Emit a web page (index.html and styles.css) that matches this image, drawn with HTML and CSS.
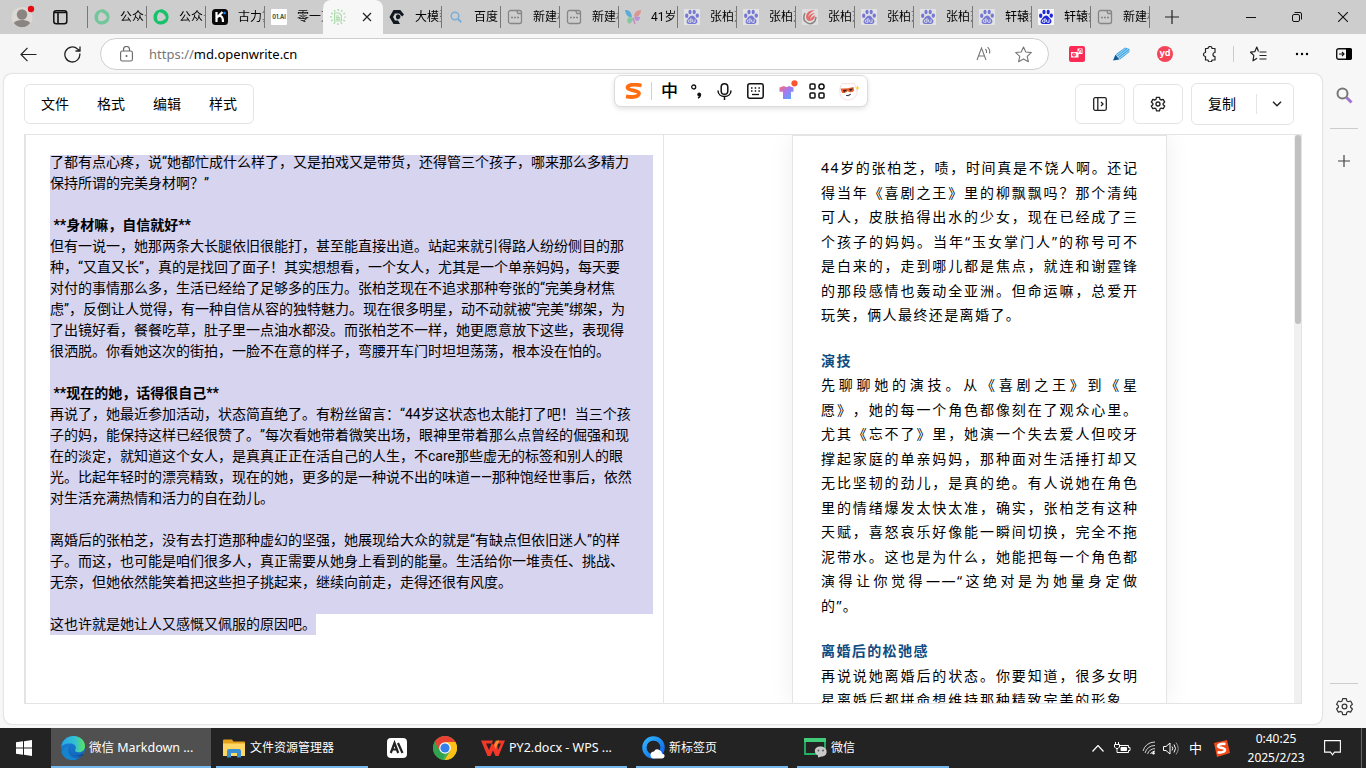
FILE: index.html
```html
<!DOCTYPE html>
<html lang="zh-CN">
<head>
<meta charset="utf-8">
<title>微信 Markdown 编辑器</title>
<link rel="stylesheet" href="styles.css">
</head>
<body>
<svg class="defs" width="0" height="0" aria-hidden="true">
  <defs>
    <linearGradient id="edgeA" x1="0" y1="0" x2="1" y2="0"><stop offset="0" stop-color="#26a7e8"/><stop offset=".6" stop-color="#35c1d0"/><stop offset="1" stop-color="#5be45a"/></linearGradient>
    <linearGradient id="edgeB" x1="0" y1="0" x2="0" y2="1"><stop offset="0" stop-color="#1b87dc"/><stop offset="1" stop-color="#1161b6"/></linearGradient>
    <linearGradient id="shirtG" x1="0" y1="0" x2="1" y2="1"><stop offset="0" stop-color="#ff6b6b"/><stop offset=".45" stop-color="#a678f5"/><stop offset="1" stop-color="#43b4f5"/></linearGradient>
    <linearGradient id="qG" x1="0" y1="0" x2="1" y2="1"><stop offset="0" stop-color="#31b4ff"/><stop offset="1" stop-color="#0b62e8"/></linearGradient>
    <symbol id="swirl" viewBox="0 0 16 16"><g fill="currentColor"><path id="blade" d="M10.500.8C5.500-.8.300 2.800.500 8c0 1.800.6 3.300 1.700 4.500 1.600.4 2.600-.2 2.300-1.700C3 7 5 2.800 10.500.8z"/><path d="M10.500.8C5.500-.8.300 2.800.500 8c0 1.800.6 3.300 1.700 4.500 1.600.4 2.600-.2 2.300-1.700C3 7 5 2.800 10.500.8z" transform="rotate(120 8 8)"/><path d="M10.500.8C5.500-.8.300 2.800.500 8c0 1.800.6 3.300 1.700 4.500 1.600.4 2.600-.2 2.300-1.700C3 7 5 2.800 10.500.8z" transform="rotate(240 8 8)"/></g></symbol>
    <symbol id="paw" viewBox="0 0 16 16"><rect width="16" height="16" fill="#fff" opacity=".85"/><g fill="currentColor"><ellipse cx="2.700" cy="6.800" rx="1.700" ry="2.200"/><ellipse cx="6" cy="3" rx="1.600" ry="2.200"/><ellipse cx="10.200" cy="3" rx="1.600" ry="2.200"/><ellipse cx="13.300" cy="6.600" rx="1.700" ry="2.200"/><path d="M8 6.400c2.200 0 2.800 2.200 4.400 3.700 1.800 1.800 1.200 4.700-1.400 4.900H5C2.400 14.800 1.900 12 3.600 10.200 5.200 8.800 5.800 6.400 8 6.400z"/></g><path d="M7 9v4.300H5.400a1.200 1.200 0 0 1 0-2.400H7M8.600 10.500v1.800q0 1 1 1h1.500v-3" fill="none" stroke="#fff" stroke-width=".9"/></symbol>
    <symbol id="page" viewBox="0 0 16 16"><path d="M3.500 1.500h6l1.500 3h3.500v8a2 2 0 0 1-2 2h-9a2 2 0 0 1-2-2v-9a2 2 0 0 1 2-2zM9.500 1.500h3a2 2 0 0 1 2 2v1" fill="none" stroke="#868686" stroke-width="1.300"/><path d="M4 8.500h2M7 8.500h2M10 8.500h2" stroke="#868686" stroke-width="1.500"/></symbol>
    <symbol id="gear" viewBox="0 0 24 24"><path d="M9.700 2h4.600l.7 3 1.700 1 3-.9 2.300 4-2.300 2.100v1.800l2.300 2.100-2.300 4-3-.9-1.700 1-.7 3H9.700L9 19.200l-1.700-1-3 .9-2.300-4L4.300 13v-1.800L2 9.100l2.300-4 3 .9L9 5z" fill="none" stroke="currentColor" stroke-linejoin="round"/><circle cx="12" cy="12" r="3" fill="none" stroke="currentColor"/></symbol>
  </defs>
</svg>

<header class="tabbar">
  <div class="profile"><svg width="24" height="24" viewBox="0 0 24 24"><circle cx="11" cy="12.500" r="10.500" fill="#dcd9d5"/><circle cx="11" cy="9.500" r="5.200" fill="#8a8581"/><path d="M2.800 18c2-4 14.400-4 16.400 0a10 10 0 0 1-16.400 0z" fill="#8a8581"/><circle cx="20" cy="4" r="3.200" fill="#e50b12"/></svg></div>
  <div class="workspaces"><svg width="15" height="15" viewBox="0 0 15 15"><rect x=".8" y=".8" width="13" height="13" rx="2.500" fill="none" stroke="#111" stroke-width="1.500"/><path d="M1 2.500h13M5 3v11" stroke="#111" stroke-width="1.600"/></svg></div>
  <nav class="tabs">
    <div class="tab"><svg class="fav dim green"><use href="#swirl"/></svg><span>公众号</span></div>
    <div class="tab"><svg class="fav green"><use href="#swirl"/></svg><span>公众号</span></div>
    <div class="tab"><svg class="fav" viewBox="0 0 16 16"><rect width="16" height="16" rx="3.500" fill="#0a0a0a"/><path d="M4.500 3v10M5 8.500 10.500 3M7 7c3-.5 4 2 4 6" fill="none" stroke="#fff" stroke-width="2.200"/><circle cx="12.500" cy="4" r="1.300" fill="#1683ff"/></svg><span>古力算</span></div>
    <div class="tab"><i class="fav yi">01.AI</i><span>零一万</span></div>
    <div class="tab active"><svg class="fav" viewBox="0 0 16 16" fill="none" stroke="#acdcac" stroke-width="1.200"><path d="M4.600 4h4.500l2.300 2.300V12H4.600z"/><path d="M6 7h3M6 8.700h4M6 10.300h4"/><circle cx="8" cy="8" r="7" stroke-width="1.900" stroke-dasharray="1.500 2.165" stroke-dashoffset=".75"/></svg><svg class="close" width="10" height="10" viewBox="0 0 10 10"><path d="m1 1 8 8M9 1 1 9" stroke="#222" stroke-width="1.200"/></svg></div>
    <div class="tab"><svg class="fav" viewBox="0 0 16 16"><path d="M4.500 1h6.800L15 5.500l-1.800 2-1.800-1.700-1.200-1.400H6L4 8l2 3.600h3l2 3.400H4.500L.5 8z" fill="#111820"/><path d="M7 6.500 9 5.200l2.300 1.300v2.600L9 10.500 7 9.200z" fill="#111820"/></svg><span>大模型</span></div>
    <div class="tab"><svg class="fav" viewBox="0 0 16 16"><circle cx="7" cy="7" r="3.800" fill="none" stroke="#7aaed8" stroke-width="1.500"/><path d="m9.800 9.800 3.500 3.500" stroke="#7aaed8" stroke-width="2"/></svg><span>百度</span></div>
    <div class="tab"><svg class="fav"><use href="#page"/></svg><span>新建标</span></div>
    <div class="tab"><svg class="fav"><use href="#page"/></svg><span>新建标</span></div>
    <div class="tab"><svg class="fav fly" viewBox="0 0 16 16"><path d="M0 1q6-1 7 7Q1 9 0 1z" fill="#2ba0dc"/><path d="M3 8.500q4-1 5 1-1 5-4 5-3-1-1-6z" fill="#62c788"/><path d="M9 7q1-6 7-6 0 6-6 7z" fill="#e57b74"/><path d="M9 8q4-1 6 0 0 4-4 4z" fill="#b07ad8"/><path d="m8 9 2 6" stroke="#ce69c8" stroke-width="1.500"/></svg><span>41岁网</span></div>
    <div class="tab"><svg class="fav baidu dim"><use href="#paw"/></svg><span>张柏芝</span></div>
    <div class="tab"><svg class="fav baidu dim"><use href="#paw"/></svg><span>张柏芝</span></div>
    <div class="tab"><svg class="fav" viewBox="0 0 16 16"><rect width="16" height="16" fill="#dedede"/><path d="M3 4Q0 10 4 13q5 4 9-1l1-4" fill="none" stroke="#858585" stroke-width="1.500"/><path d="M13 1Q5 1 4 7q0 5 4 5 5-1 5-6-3 2-5 4 1-4 5-6-4 0-7 4 1-4 7-7z" fill="#e66b6b"/></svg><span>张柏芝</span></div>
    <div class="tab"><svg class="fav baidu dim"><use href="#paw"/></svg><span>张柏芝</span></div>
    <div class="tab"><svg class="fav baidu dim"><use href="#paw"/></svg><span>张柏芝</span></div>
    <div class="tab"><svg class="fav baidu dim"><use href="#paw"/></svg><span>轩辕剑</span></div>
    <div class="tab"><svg class="fav baidu"><use href="#paw"/></svg><span>轩辕剑</span></div>
    <div class="tab"><svg class="fav"><use href="#page"/></svg><span>新建标</span></div>
  </nav>
  <div class="newtab"><svg width="14" height="14" viewBox="0 0 14 14"><path d="M7 0v14M0 7h14" stroke="#222" stroke-width="1.200"/></svg></div>
  <div class="winbtns">
    <svg width="10" height="10" viewBox="0 0 10 10"><path d="M0 5.500h10" stroke="#111"/></svg>
    <svg width="10" height="10" viewBox="0 0 10 10" fill="none" stroke="#111"><rect x=".5" y="2.500" width="7" height="7" rx="1.500"/><path d="M2.500.5H8A1.500 1.500 0 0 1 9.500 2v5.500"/></svg>
    <svg width="10" height="10" viewBox="0 0 10 10"><path d="m0 0 10 10M10 0 0 10" stroke="#111" stroke-width="1.100"/></svg>
  </div>
</header>

<div class="toolbar">
  <div class="nav"><svg width="17" height="15" viewBox="0 0 17 15" fill="none" stroke="#222" stroke-width="1.200"><path d="M16.500 7.500H1M7.500.8 1 7.500l6.500 6.700"/></svg></div>
  <div class="nav"><svg width="17" height="17" viewBox="0 0 17 17" fill="none" stroke="#222" stroke-width="1.300"><path d="M15.800 7.500A7.500 7.500 0 1 1 13.500 3L16 5M16 .5V5h-4.500"/></svg></div>
  <div class="address">
    <svg width="13" height="16" viewBox="0 0 13 16" fill="none" stroke="#666" stroke-width="1.100"><rect x=".6" y="5" width="11.800" height="10" rx="1.800"/><path d="M3.500 5V3.500a3 3 0 0 1 6 0V5"/><circle cx="6.500" cy="10" r=".5" fill="#666"/></svg>
    <p class="url"><span>https://</span>md.openwrite.cn</p>
    <svg class="read" width="16" height="16" viewBox="0 0 16 16" fill="none" stroke="#777" stroke-width="1.100"><path d="m1 14 4.500-12L10 14M2.500 10h6M9.500 3q1.500 1.500 1 4M11.500 1.200q3 2.500 2 6.300"/></svg>
    <svg width="17" height="17" viewBox="0 0 17 17" fill="none" stroke="#777" stroke-width="1.100" stroke-linejoin="round"><path d="m8.500 1 2.300 5 5.500.6-4.100 3.700 1.200 5.400-4.900-2.800-4.900 2.800 1.200-5.400L.7 6.600l5.500-.6z"/></svg>
  </div>
  <div class="ext"><svg width="16" height="16" viewBox="0 0 16 16"><rect width="16" height="16" rx="2" fill="#fb2b55"/><path d="M8.500 2.500h5v5.500h-4v3.500h-7.500V6h6.500z" fill="#fff"/><path d="M5 6.500v4.500M3.500 7.800h3.200v1.800H3.500zM9 6.800l1.800-3.300h1.400v3.500" fill="none" stroke="#fb2b55" stroke-width=".9"/></svg></div>
  <div class="ext"><svg width="17" height="14" viewBox="0 0 17 14"><path d="M3 7 12 .5 16.500 2v3L7 12.500z" fill="#45a7e4"/><path d="m3.500 8.500 9-7M4.700 10l10.500-8M6 11.500 16.500 3.500" stroke="#d9effb" stroke-width=".7"/><path d="m2.500 7.500 4 5L0 13.500z" fill="#125c96"/></svg></div>
  <div class="ext"><i class="yd">yd</i></div>
  <div class="ext"><svg width="16" height="16" viewBox="0 0 16 16" fill="none" stroke="#222" stroke-width="1.200"><path d="M4.500 2.500H7a2 2 0 0 1 4 0h3v4a2 2 0 0 0 0 4v3.500h-3a2 2 0 0 1-4 0H4.500v-3.500a2 2 0 0 1 0-4z" stroke-linejoin="round"/></svg></div>
  <i class="rule"></i>
  <div class="ext"><svg width="17" height="16" viewBox="0 0 17 16" fill="none" stroke="#222" stroke-width="1.200"><path d="M8.500 5.500 6.800 1 4.900 5.600.5 6.200l3.300 3.200L3 14.800l4-2.600" stroke-linejoin="round"/><path d="M9.500 6h7M9.500 9.500h7M9.500 13h7" /></svg></div>
  <div class="ext"><svg width="14" height="4" viewBox="0 0 14 4"><circle cx="2" cy="2" r="1.200"/><circle cx="7" cy="2" r="1.200"/><circle cx="12" cy="2" r="1.200"/></svg></div>
  <div class="ext last"><svg width="16" height="12" viewBox="0 0 16 12"><rect x=".7" y=".7" width="14.600" height="10.600" rx="2" fill="none" stroke="#111" stroke-width="1.400"/><path d="M10 0h4a2 2 0 0 1 2 2v8a2 2 0 0 1-2 2h-4z"/><path d="M3 6h5M6 4l2 2-2 2" fill="none" stroke="#111" stroke-width="1.100"/></svg></div>
</div>

<div class="body">
  <main class="card">
    <div class="apphead">
      <nav class="menu"><span>文件</span><span>格式</span><span>编辑</span><span>样式</span></nav>
      <div class="actions">
        <div class="btn"><svg width="14" height="14" viewBox="0 0 14 14" fill="none" stroke="#222" stroke-width="1.300"><rect x=".7" y=".7" width="12.600" height="12.600" rx="1.500"/><path d="M4.800 1v12M8 5l2 2-2 2"/></svg></div>
        <div class="btn"><svg width="16" height="16" stroke-width="2"><use href="#gear"/></svg></div>
        <div class="copy"><span>复制</span><i></i><svg width="10" height="6" viewBox="0 0 10 6" fill="none" stroke="#222" stroke-width="1.500"><path d="m1 .8 4 4 4-4"/></svg></div>
      </div>
    </div>
    <div class="work">
      <section class="editor">
        <div class="text">
          <div class="sel">
            <p>了都有点心疼，说“她都忙成什么样了，又是拍戏又是带货，还得管三个孩子，哪来那么多精力</p>
            <p>保持所谓的完美身材啊？”</p>
            <p></p>
            <p class="strong"> **身材嘛，自信就好**</p>
            <p>但有一说一，她那两条大长腿依旧很能打，甚至能直接出道。站起来就引得路人纷纷侧目的那</p>
            <p>种，“又直又长”，真的是找回了面子！其实想想看，一个女人，尤其是一个单亲妈妈，每天要</p>
            <p>对付的事情那么多，生活已经给了足够多的压力。张柏芝现在不追求那种夸张的“完美身材焦</p>
            <p>虑”，反倒让人觉得，有一种自信从容的独特魅力。现在很多明星，动不动就被“完美”绑架，为</p>
            <p>了出镜好看，餐餐吃草，肚子里一点油水都没。而张柏芝不一样，她更愿意放下这些，表现得</p>
            <p>很洒脱。你看她这次的街拍，一脸不在意的样子，弯腰开车门时坦坦荡荡，根本没在怕的。</p>
            <p></p>
            <p class="strong"> **现在的她，话得很自己**</p>
            <p>再说了，她最近参加活动，状态简直绝了。有粉丝留言：“44岁这状态也太能打了吧！当三个孩</p>
            <p>子的妈，能保持这样已经很赞了。”每次看她带着微笑出场，眼神里带着那么点曾经的倔强和现</p>
            <p>在的淡定，就知道这个女人，是真真正正在活自己的人生，不care那些虚无的标签和别人的眼</p>
            <p>光。比起年轻时的漂亮精致，现在的她，更多的是一种说不出的味道——那种饱经世事后，依然</p>
            <p>对生活充满热情和活力的自在劲儿。</p>
            <p></p>
            <p>离婚后的张柏芝，没有去打造那种虚幻的坚强，她展现给大众的就是“有缺点但依旧迷人”的样</p>
            <p>子。而这，也可能是咱们很多人，真正需要从她身上看到的能量。生活给你一堆责任、挑战、</p>
            <p>无奈，但她依然能笑着把这些担子挑起来，继续向前走，走得还很有风度。</p>
            <p></p>
          </div>
          <p class="tail">这也许就是她让人又感慨又佩服的原因吧。</p>
        </div>
      </section>
      <section class="preview">
        <article class="phone">
          <div class="para">
            <p>44岁的张柏芝，啧，时间真是不饶人啊。还记</p>
            <p>得当年《喜剧之王》里的柳飘飘吗？那个清纯</p>
            <p>可人，皮肤掐得出水的少女，现在已经成了三</p>
            <p>个孩子的妈妈。当年“玉女掌门人”的称号可不</p>
            <p>是白来的，走到哪儿都是焦点，就连和谢霆锋</p>
            <p>的那段感情也轰动全亚洲。但命运嘛，总爱开</p>
            <p class="end">玩笑，俩人最终还是离婚了。</p>
          </div>
          <h3>演技</h3>
          <div class="para">
            <p>先聊聊她的演技。从《喜剧之王》到《星</p>
            <p>愿》，她的每一个角色都像刻在了观众心里。</p>
            <p>尤其《忘不了》里，她演一个失去爱人但咬牙</p>
            <p>撑起家庭的单亲妈妈，那种面对生活捶打却又</p>
            <p>无比坚韧的劲儿，是真的绝。有人说她在角色</p>
            <p>里的情绪爆发太快太准，确实，张柏芝有这种</p>
            <p>天赋，喜怒哀乐好像能一瞬间切换，完全不拖</p>
            <p>泥带水。这也是为什么，她能把每一个角色都</p>
            <p>演得让你觉得——“这绝对是为她量身定做</p>
            <p class="end">的”。</p>
          </div>
          <h3>离婚后的松弛感</h3>
          <div class="para">
            <p>再说说她离婚后的状态。你要知道，很多女明</p>
            <p class="cut">星离婚后都拼命想维持那种精致完美的形象</p>
          </div>
        </article>
        <div class="scroll"><i></i></div>
      </section>
    </div>
  </main>
  <aside class="side">
    <svg width="17" height="17" viewBox="0 0 17 17" fill="none"><circle cx="6.500" cy="6.500" r="5" stroke="#777" stroke-width="2"/><path d="m10.500 10.500 5 5" stroke="#a073d0" stroke-width="3"/></svg>
    <i></i>
    <svg class="add" width="12" height="12" viewBox="0 0 12 12"><path d="M6 0v12M0 6h12" stroke="#444" stroke-width="1.200"/></svg>
    <i class="low"></i>
    <svg width="19" height="19" stroke-width="1.500"><use href="#gear"/></svg>
  </aside>
</div>

<div class="ime">
  <svg width="19" height="17" viewBox="0 0 19 17"><path d="M17.500 2.500C9 .8 3.500 2 3.500 4.800s11.500 2.500 11.500 5.500c0 3.500-6 4.500-13 3" fill="none" stroke="#ff6e12" stroke-width="3.800"/></svg>
  <i></i>
  <b>中</b>
  <svg width="11" height="15" viewBox="0 0 11 15"><circle cx="2.700" cy="3" r="2" fill="none" stroke="#111" stroke-width="1.300"/><path d="M9.500 10.500q0 2.500-2.500 3.500" fill="none" stroke="#111" stroke-width="1.400"/><circle cx="8.200" cy="10.500" r="1.900" fill="#111"/></svg>
  <svg width="15" height="17" viewBox="0 0 15 17" fill="none" stroke="#111" stroke-width="1.500"><rect x="4.200" y=".8" width="6.600" height="10.500" rx="3.300"/><path d="M1 7.500c0 8 13 8 13 0M7.500 13.500V17"/></svg>
  <svg width="17" height="16" viewBox="0 0 17 16"><rect x=".8" y=".8" width="15.400" height="14.400" rx="2" fill="none" stroke="#111" stroke-width="1.500"/><path d="M4 5h9M4 8h9" stroke="#111" stroke-width="1.500" stroke-dasharray="1.500 2.200"/><path d="M5 11.500h7" stroke="#111" stroke-width="1.300"/></svg>
  <svg width="19" height="22" viewBox="0 0 19 22"><path d="M.5 7.500 5 6q2.500 2 5 0l4.500 1.500v4.200H12V19H4v-7.300H.5z" fill="url(#shirtG)"/><circle cx="15.500" cy="3.300" r="3.100" fill="#fb552f"/></svg>
  <svg width="16" height="16" viewBox="0 0 16 16" fill="none" stroke="#111" stroke-width="1.500"><rect x="1" y="1" width="5" height="5" rx="1"/><circle cx="12.500" cy="3.500" r="2.600"/><rect x="1" y="10" width="5" height="5" rx="1"/><rect x="10" y="10" width="5" height="5" rx="1"/></svg>
  <svg width="21" height="20" viewBox="0 0 21 20"><path d="M1 12Q0 5 4 2l3 1q2-1 5 0l3-1q4 6 3 11-3 6-9 6-7 0-8-7z" fill="#fff" stroke="#f3d5d5" stroke-width=".8"/><path d="M1.500 7.500q6 .5 13-1.500l.5 4q-3 2-5 1l-1.500-1q-1 2-5.500 2z" fill="#ec6130"/><path d="m4 9.500 3.500-.5-2 1.800zM10.500 8.500l3-.5-2 1.800zM7 14.500q3 1 5-1.500" fill="#222" stroke="#222" stroke-width=".7"/><path d="m18.500 4 .8 2.200 1.700.8-1.700.8-.8 2.200-.8-2.200L16 7l1.700-.8z" fill="#ffd83a"/></svg>
</div>

<footer class="taskbar">
  <div class="start"><svg width="16" height="16" viewBox="0 0 16 16"><path d="M0 2.300 7 1.300V7.500H0zM8 1.200 16 0v7.500H8zM0 8.500h7v6.200l-7-1zM8 8.500h8V16l-8-1.200z" fill="#fff"/></svg></div>
  <div class="task on"><svg width="24" height="24" viewBox="0 0 24 24"><circle cx="12" cy="12" r="12" fill="url(#edgeB)"/><path d="M.2 11C1.500 3.500 7 0 12.500 0 20 0 24 5.500 24 10c0 4-3 6.300-6.500 6.300-2.500 0-3.800-1-3.300-2.300 2.300-4.300-1.800-7-5.700-6.500C4 7.500 1 9.500.2 11z" fill="url(#edgeA)"/><path d="M8 10c-3.500 7 2.500 13.500 10 12-6.500 5-16 1-17.500-6C2 12 5 10 8 10z" fill="#1683cf"/><path d="M10.500 9.500c-4 2.500-2 10 5 10 3 0 5.500-1.500 7-2.500l-1 3c-8 1-13-2-13-7 0-2 .7-3 2-3.500z" fill="#124a85"/></svg><span class="seg">微信 Markdown ...</span></div>
  <div class="task files"><svg width="22" height="19" viewBox="0 0 22 19"><path d="M0 1.500Q0 .5 1 .5h8l1.500 2H21q1 0 1 1V17H0z" fill="#e4a21c"/><path d="M0 4.500h22V17H0z" fill="#ffd766"/><path d="M4 18.500V12q0-2 2-2h10q2 0 2 2v6.500h-4V14H8v4.500z" fill="#3a8fd1"/></svg><span>文件资源管理器</span></div>
  <div class="pin"><svg width="20" height="20" viewBox="0 0 20 20"><rect width="20" height="20" rx="4" fill="#fff"/><path d="M3.800 15 7.500 5l3.700 10M5.500 11.500h4M11 5l4.500 10" fill="none" stroke="#222" stroke-width="2.200"/></svg></div>
  <div class="pin"><svg width="24" height="24" viewBox="0 0 24 24"><circle cx="12" cy="12" r="12" fill="#4caf50"/><path d="M12 12 1.600 6A12 12 0 0 1 22.400 6z" fill="#e94235"/><path d="M12 6h10.400A12 12 0 0 1 11.500 24l5.700-9z" fill="#fbc116"/><path d="M1.600 6 6.800 15l5.200-3z" fill="#e94235"/><path d="M1.600 6 6.800 15l5.200 3-2.500 5.700A12 12 0 0 1 1.600 6z" fill="#31a350"/><circle cx="12" cy="12" r="5.800" fill="#fff"/><circle cx="12" cy="12" r="4.600" fill="#347fe9"/></svg></div>
  <div class="task wps"><svg width="24" height="17" viewBox="0 0 24 17"><path fill-rule="evenodd" d="M0 .5h14.500L12.500 5l-1-1.500H5l3 6.500 4-9.500h2.500L16 3l1 7 3-6.500h-4L17 .5h7L17.500 16h-3L12 10.500 9.500 16h-3z" fill="#f3382a"/><path d="m13 5 2.500-4.500h3L14.500 9z" fill="#ff8a2b"/></svg><span class="seg">PY2.docx - WPS ...</span></div>
  <div class="task qb"><svg width="24" height="24" viewBox="0 0 24 24"><circle cx="11.500" cy="11.500" r="9" fill="none" stroke="url(#qG)" stroke-width="4.500"/><circle cx="11.500" cy="11.500" r="6.800" fill="#242424"/><path d="M12 22.500a3.500 3.500 0 0 1 0-7q2-4 6-1 2 1 2 3 3 .5 2.500 3-.5 2-2.500 2z" fill="#fff"/></svg><span>新标签页</span></div>
  <div class="task wx"><svg width="24" height="20" viewBox="0 0 24 20"><path d="M1 1h20v15H1z" fill="none" stroke="#20b464" stroke-width="1.800"/><path d="M0 0h22v4H0z" fill="#40cc78"/><path d="M16.500 8.500c8 0 8 10 1 10l-3.500 1v-2C9 15 10 8.500 16.500 8.500z" fill="#c9c9c9"/><circle cx="14.500" cy="12.500" r=".9" fill="#555"/><circle cx="19" cy="12.500" r=".9" fill="#555"/></svg><span>微信</span></div>
  <div class="tray">
    <svg width="12" height="7" viewBox="0 0 12 7" fill="none" stroke="#fff" stroke-width="1.200"><path d="m.5 6.500 5.500-6 5.500 6"/></svg>
    <svg width="17" height="13" viewBox="0 0 17 13" fill="none" stroke="#fff"><path d="M6 3.500h8.500v2h1.500v3h-1.500v2H5"/><path d="M7 5.500h5.500v3H7z" fill="#fff"/><path d="M1.500 0v2.500M4.500 0v2.500M.5 2.500h5V5L4 6.500H2L.5 5zM3 6.500v4h2"/></svg>
    <svg width="14" height="14" viewBox="0 0 14 14" fill="none" stroke="#fff"><path d="M1 10A12 12 0 0 1 13 1M3 12A10 10 0 0 1 13 4.500M5.500 13A8 8 0 0 1 13 7.700" opacity=".8"/><path d="M8.500 13a6 6 0 0 1 4.500-3"/><circle cx="11.500" cy="12.300" r="1.200" fill="#fff" stroke="none"/></svg>
    <svg width="16" height="13" viewBox="0 0 16 13" fill="none" stroke="#fff"><path d="M.5 4.500h2.500L7 1v11L3 8.500H.5zM9 4.500q1.500 2 0 4M11 2.500q3 4 0 8"/><path d="M13 .5q4.500 6 0 12" opacity=".5"/></svg>
    <span>中</span>
    <svg width="17" height="17" viewBox="0 0 17 17"><path d="m1 3 13-3 3 13-13 4z" fill="#f14a18"/><path d="M12.500 4C8 3.500 5 4.500 5 6.300s7 1.300 7 3.700c0 2-4 2.800-7.500 2.300" fill="none" stroke="#fff" stroke-width="2.500"/></svg>
  </div>
  <div class="clock"><time>0:40:25</time><time>2025/2/23</time></div>
  <div class="note"><svg width="17" height="16" viewBox="0 0 17 16" fill="none" stroke="#fff" stroke-width="1.100"><path d="M.6.6h15.800v11.500H10.500l-2 2.700-2-2.700H.6z"/></svg></div>
  <i class="desk"></i>
</footer>
</body>
</html>
```
FILE: styles.css
```css
* { box-sizing: border-box; }
body {
  margin: 0; width: 1366px; height: 768px; overflow: hidden;
  display: flex; flex-direction: column; background: #f7f7f7;
  font: 14px/21px Roboto, "Noto Sans CJK SC", sans-serif; color: #000;
  text-spacing-trim: space-all; position: relative;
}
p, h3 { margin: 0; white-space: pre; }
svg { flex: none; display: block; }
.defs { position: absolute; }

/* tab strip */
.tabbar { height: 34px; flex: none; background: #cdcdcd; display: flex; align-items: center; font-size: 12px; }
.profile { width: 44px; padding-left: 11px; }
.workspaces { width: 43px; padding-left: 9px; }
.tabs { display: flex; align-self: stretch; border-left: 1px solid #777; border-image: linear-gradient(#cdcdcd 7px, #777 7px 27px, #cdcdcd 27px) 1; }
.tab { width: 59px; display: flex; align-items: center; padding-left: 6px; border-right: 1px solid #777; border-image: linear-gradient(#cdcdcd 7px, #777 7px 27px, #cdcdcd 27px) 1; }
.tab span { width: 26px; margin-left: 10px; overflow: hidden; white-space: nowrap; font-size: 12px; -webkit-mask: linear-gradient(90deg, #000 22px, transparent 30px); mask: linear-gradient(90deg, #000 22px, transparent 30px); }
.fav { width: 16px; height: 16px; flex: none; }
.dim { opacity: .5; }
.fly { opacity: .7; }
.green { color: #17c26a; }
.baidu { color: #2028dc; }
.yi { background: #fff; color: #14513d; font: 700 5.5px/16px Inter, sans-serif; text-align: center; border-radius: 1px; }
.tab.active { background: #f7f7f7; border: 0; border-radius: 8px 8px 0 0; margin: 0 0 0 -1px; width: 60px; padding-left: 7px; }
.close { margin-left: 16px; }
.newtab { margin-left: 15px; width: 14px; }
.winbtns { margin-left: auto; display: flex; gap: 36px; padding-right: 18px; }

/* address toolbar */
.toolbar { height: 40px; flex: none; display: flex; align-items: center; padding-left: 6px; }
.nav { width: 44px; display: flex; justify-content: center; }
.address { width: 949px; height: 32px; margin-left: 6px; border: 1px solid #cecece; border-radius: 16px; background: #fff; display: flex; align-items: center; padding: 0 16px 0 19px; }
.url { margin-left: 16px; font: 13px/20px "Noto Sans", sans-serif; flex: 1; }
.url span { color: #777; }
.read { margin-right: 23px; }
.ext { width: 44px; display: flex; justify-content: center; }
.address + .ext { margin-left: 6px; }
.ext.last { width: 40px; }
.rule { width: 1px; height: 16px; background: #ccc; margin: 0 2px; }
.yd { width: 16px; height: 16px; border-radius: 50%; background: #f74357; color: #fff; font: 700 9px/14px Inter, sans-serif; text-align: center; }

/* page card */
.body { height: 654px; flex: none; display: flex; padding-left: 4px; }
.card { width: 1318px; height: 650px; background: #fff; border-radius: 8px; box-shadow: 0 0 2px rgba(0,0,0,.28); padding: 9px 20px 0; }
.apphead { display: flex; justify-content: space-between; align-items: center; height: 42px; padding-right: 8px; }
.menu { display: flex; gap: 28px; border: 1px solid #e4e4e7; border-radius: 6px; height: 40px; width: 230px; padding-left: 16px; align-items: center; }
.actions { display: flex; gap: 8px; align-items: center; }
.btn { width: 50px; height: 40px; border: 1px solid #e4e4e7; border-radius: 6px; display: flex; align-items: center; justify-content: center; color: #222; }
.copy { width: 103px; height: 42px; border: 1px solid #e4e4e7; border-radius: 6px; display: flex; align-items: center; padding-left: 16px; }
.copy i { width: 1px; height: 20px; background: #e4e4e7; margin: 0 15px 0 20px; }
.work { margin-top: 9px; width: 1278px; height: 570px; border: 1px solid #e4e4e4; border-left-width: 2px; display: flex; }
.editor { width: 638px; border-right: 1px solid #e4e4e4; padding: 20px 10px 0 24px; }
.text { overflow: hidden; }
.text p { height: 21px; width: fit-content; }
.sel { background: #d7d4f0; margin-top: -3px; width: 603px; }
.tail { background: #d7d4f0; }
.strong { font-weight: 700; }
.preview { flex: 1; display: flex; overflow: hidden; padding-left: 128px; }
.phone { width: 375px; border: 1px solid #e4e4e4; border-bottom: 0; box-shadow: 0 0 24px rgba(0,0,0,.07); padding: 20px 26px 0 28px; font: 14px/24.5px "Noto Sans", "Noto Sans CJK SC", sans-serif; letter-spacing: 1.4px; }
.para p { width: 317.5px; height: 24.5px; text-align-last: justify; white-space: normal; }
.para p.end { text-align-last: left; }
.para p.cut { width: 301.5px; }
.phone h3 { font-size: 14px; line-height: 24.5px; margin-top: 21px; color: #0f4c81; }
.scroll { width: 7px; background: #f0f0f0; margin-left: auto; }
.scroll i { display: block; height: 189px; background: #c1c1c1; border-radius: 3px; margin-left: 1px; }

/* browser sidebar */
.side { flex: 1; display: flex; flex-direction: column; align-items: center; padding-top: 13px; color: #333; }
.side i { width: 28px; height: 1px; background: #ccc; margin-top: 24px; }
.side .add { margin-top: 26px; }
.side .low { margin: auto 0 13px; }
.side svg:last-child { margin-bottom: 12px; }

/* input method bar floats above the page */
.ime { position: absolute; left: 614px; top: 75px; width: 254px; height: 32px; background: #fff; border: 1px solid #dcdcdc; border-radius: 7px; box-shadow: 0 2px 5px rgba(0,0,0,.12); display: flex; align-items: center; padding-left: 9px; }
.ime i { width: 1px; height: 18px; background: #d0d0d0; margin: 0 9px 0 8px; }
.ime b { font-size: 17px; width: 17px; font-weight: 500; margin-right: 13px; }
.ime svg + svg { margin-left: 15px; }
.ime svg:nth-of-type(5) { margin-left: 15px; }
.ime svg:nth-of-type(6) { margin-left: 11px; }
.ime svg:nth-of-type(7) { margin-left: 14px; }

/* taskbar */
.taskbar { height: 40px; flex: none; background: #232323; color: #fff; display: flex; align-items: stretch; font-size: 12px; }
.start { width: 51px; display: flex; align-items: center; padding-left: 16px; }
.task { width: 152px; border-bottom: 2px solid #76b9ed; display: flex; align-items: center; gap: 4px; padding: 2px 0 0 6px; white-space: nowrap; }
.task.on { width: 160px; background: #505050; padding-left: 10px; }
.files { margin: 0 5px; padding-left: 7px; gap: 5px; }
.pin { width: 48px; display: flex; align-items: center; justify-content: center; }
.wps { margin-left: 6px; }
.qb, .wx { margin-left: 9px; }
.qb { gap: 3px; }
.wx { padding-left: 7px; gap: 3px; }
.seg { font: 12.5px/16px "Noto Sans", "Noto Sans CJK SC", sans-serif; letter-spacing: 0; }
.tray { margin-left: 143px; display: flex; align-items: center; gap: 11px; }
.tray svg:nth-of-type(2) { margin-left: -1px; }
.tray svg:nth-of-type(4) { margin-left: -4px; }
.tray span { font-size: 13px; margin-left: -1px; }
.clock { width: 78px; margin-left: 7px; display: flex; flex-direction: column; justify-content: center; text-align: center; font: 12px/19px "Noto Sans", sans-serif; }
.note { margin-left: 9px; display: flex; align-items: center; }
.desk { width: 1px; background: #666; margin: 0 4px 0 auto; }
```
